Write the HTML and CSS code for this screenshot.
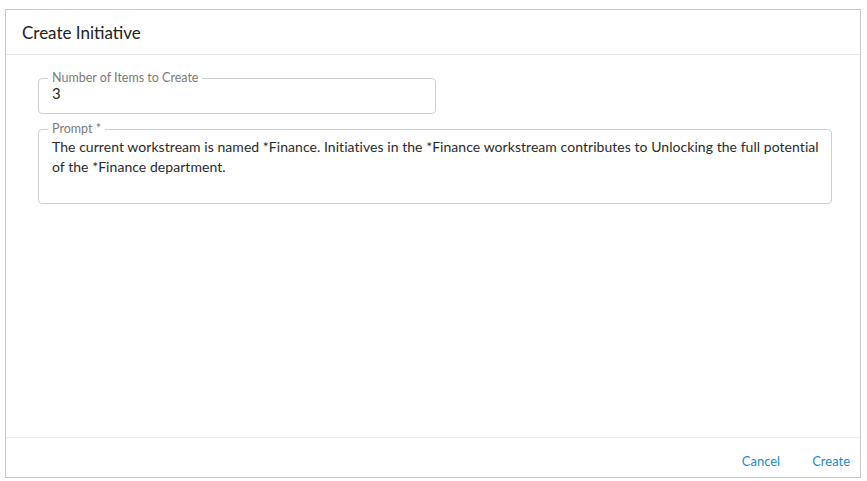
FILE: index.html
```html
<!DOCTYPE html>
<html>
<head>
<meta charset="utf-8">
<link rel="stylesheet" href="styles.css">
</head>
<body>
<div class="dialog">
  <div class="dialog-header">Create Initiative</div>
  <div class="dialog-body">
    <fieldset class="field field-short">
      <legend>Number of Items to Create</legend>
      <div class="field-value">3</div>
    </fieldset>
    <fieldset class="field field-multi">
      <legend>Prompt *</legend>
      <div class="field-value">The current workstream is named *Finance. Initiatives in the *Finance workstream contributes to Unlocking the full potential of the *Finance department.</div>
    </fieldset>
  </div>
  <div class="dialog-footer">
    <button class="btn">Cancel</button>
    <button class="btn">Create</button>
  </div>
</div>
</body>
</html>
```
FILE: styles.css
```css
* { box-sizing: border-box; }
html, body { height: 100%; }
body {
  margin: 0;
  padding: 9px 6px 3px 5px;
  background: #fff;
  font-family: Lato, "Open Sans", sans-serif;
  color: #2b2b2b;
}
.dialog {
  height: 469px;
  border: 1px solid #c9c9c9;
  display: flex;
  flex-direction: column;
  background: #fff;
}
.dialog-header {
  height: 45px;
  flex: none;
  border-bottom: 1px solid #e6e6e6;
  padding: 0 16px;
  display: flex;
  align-items: center;
  font-size: 17px;
  color: #222;
}
.dialog-body {
  flex: 1;
  padding: 16px 28px 0 32px;
  display: flex;
  flex-direction: column;
  gap: 8px;
}
.field {
  margin: 0;
  border: 1px solid #cfcfcf;
  border-radius: 4px;
  padding: 0 6px 10px 13px;
  min-width: 0;
}
.field legend {
  font-size: 12.5px;
  line-height: 14px;
  color: #7a7a7a;
  padding: 0 4px;
  margin-left: -4px;
}
.field-short { width: 398px; }
.field-value {
  font-size: 14px;
  letter-spacing: 0.05px;
  line-height: 20px;
  color: #2b2b2b;
  margin-top: -2px;
}
.field-short .field-value { font-size: 15px; }
.field-multi { height: 82px; }
.field-multi .field-value { margin-top: 1px; }
.dialog-footer {
  height: 40px;
  flex: none;
  border-top: 1px solid #ececec;
  display: flex;
  justify-content: flex-end;
  align-items: center;
  padding-top: 6px;
  padding-right: 2px;
}
.btn {
  background: none;
  border: none;
  font-family: inherit;
  font-size: 13px;
  color: #1c8ccc;
  padding: 4px 8px;
  margin-left: 16px;
  cursor: pointer;
}
```
